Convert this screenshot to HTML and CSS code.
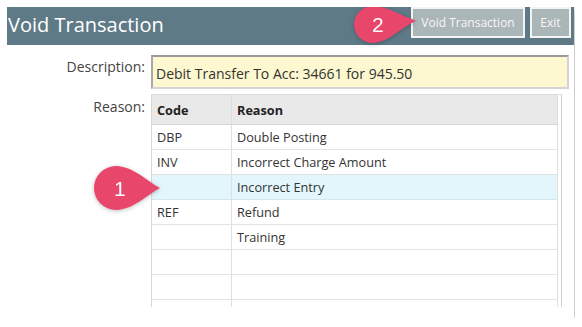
FILE: index.html
```html
<!DOCTYPE html>
<html lang="en">
<head>
  <meta charset="UTF-8">
  <title>Void Transaction</title>
  <link rel="stylesheet" href="styles.css">
</head>
<body>

<div class="dialog">
  <div class="dialog-header">
    <h1 class="title">Void Transaction</h1>
    <div class="actions">
      <button class="btn btn-void">Void Transaction</button>
      <button class="btn btn-exit">Exit</button>
    </div>
  </div>

  <div class="dialog-body">
    <div class="field">
      <label class="field-label">Description:</label>
      <div class="input">Debit Transfer To Acc: 34661 for 945.50</div>
    </div>

    <div class="field field-reason">
      <label class="field-label">Reason:</label>
      <div class="grid">
        <table>
          <thead>
            <tr><th class="col-code">Code</th><th>Reason</th></tr>
          </thead>
          <tbody>
            <tr><td>DBP</td><td>Double Posting</td></tr>
            <tr><td>INV</td><td>Incorrect Charge Amount</td></tr>
            <tr class="selected"><td></td><td>Incorrect Entry</td></tr>
            <tr><td>REF</td><td>Refund</td></tr>
            <tr><td></td><td>Training</td></tr>
            <tr><td></td><td></td></tr>
            <tr><td></td><td></td></tr>
            <tr><td></td><td></td></tr>
          </tbody>
        </table>
      </div>
    </div>
  </div>

  <!-- callout markers -->
  <div class="marker marker-1">
    <svg width="66" height="44" viewBox="0 0 60 40"><path d="M60 20 C47 13 37 1 20 0 A20 20 0 1 0 20 40 C37 39 47 27 60 20 Z"/></svg>
    <span>1</span>
  </div>
  <div class="marker marker-2">
    <svg width="62" height="37" viewBox="0 0 67 40"><path d="M67 16 C50 10 38 1 20 0 A20 20 0 1 0 20 40 C38 39 50 24 67 16 Z"/></svg>
    <span>2</span>
  </div>
</div>

</body>
</html>
```

FILE: styles.css
```css
body {
  margin: 7px;
  background: #ffffff;
  font-family: 'Open Sans', 'Liberation Sans', sans-serif;
  color: #333;
}

.dialog {
  position: relative;
  width: 567px;
  height: 311px;
  background: #ffffff;
  box-shadow: 1px 2px 7px rgba(0, 0, 0, 0.35);
}

.dialog-header {
  display: flex;
  justify-content: space-between;
  align-items: flex-start;
  height: 38px;
  background: #5f7a87;
}

.title {
  margin: 0;
  padding-left: 1px;
  font-size: 20px;
  font-weight: normal;
  line-height: 36px;
  color: #ffffff;
}

.actions {
  display: flex;
  gap: 5px;
  margin-right: 3px;
}

.btn {
  height: 31px;
  padding: 0;
  background: #abb6b8;
  border: 2px solid #f4f4f4;
  color: #f7f7f7;
  font-family: 'Open Sans', 'Liberation Sans', sans-serif;
  font-size: 12px;
  white-space: nowrap;
}

.btn-void {
  width: 114px;
}

.btn-exit {
  width: 41px;
}

.dialog-body {
  padding-top: 10px;
}

.field {
  display: flex;
  gap: 6px;
}

.field-label {
  width: 138px;
  flex: none;
  text-align: right;
  font-size: 14px;
  color: #444;
  line-height: 22px;
  padding-top: 1px;
}

.input {
  width: 411px;
  height: 30px;
  background: #fdf8cf;
  border: 2px solid #d4d4d4;
  border-top-color: #9a9a9a;
  border-left-color: #a8a8a8;
  padding-left: 3px;
  font-size: 14px;
  line-height: 34px;
  color: #333;
}

.field-reason {
  margin-top: 5px;
}

.field-reason .field-label {
  padding-top: 2px;
}

.grid {
  width: 411px;
  height: 213px;
  overflow: hidden;
  border-left: 1px solid #d6d6d6;
  border-right: 1px solid #d0d0d0;
  border-top: 1px solid #dcdcdc;
  padding-right: 3px;
  box-sizing: border-box;
}

table {
  width: 100%;
  border-collapse: collapse;
  font-size: 12.7px;
}

th, td {
  text-align: left;
  padding: 0 0 0 5px;
  border-right: 1px solid #e0e0e0;
  border-bottom: 1px solid #e2e2e2;
}

th {
  height: 29px;
  background: #e9e9e9;
  color: #222;
  font-weight: bold;
  border-bottom-color: #d6d6d6;
}

td {
  height: 24px;
  color: #333;
}

.col-code {
  width: 74px;
}

tr.selected td {
  background: #e2f6fb;
  border-bottom-color: #d3e8ee;
}

.marker {
  position: absolute;
  filter: drop-shadow(0 1px 2px rgba(0, 0, 0, 0.25));
}

.marker svg {
  fill: #e9466b;
  display: block;
}

.marker span {
  position: absolute;
  color: #ffffff;
  font-family: 'Liberation Sans', sans-serif;
  font-size: 21px;
  line-height: 1;
}

.marker-1 {
  left: 87px;
  top: 159px;
}

.marker-1 span {
  left: 20px;
  top: 12px;
}

.marker-2 {
  left: 347px;
  top: -1px;
}

.marker-2 span {
  left: 18px;
  top: 8px;
}
```
